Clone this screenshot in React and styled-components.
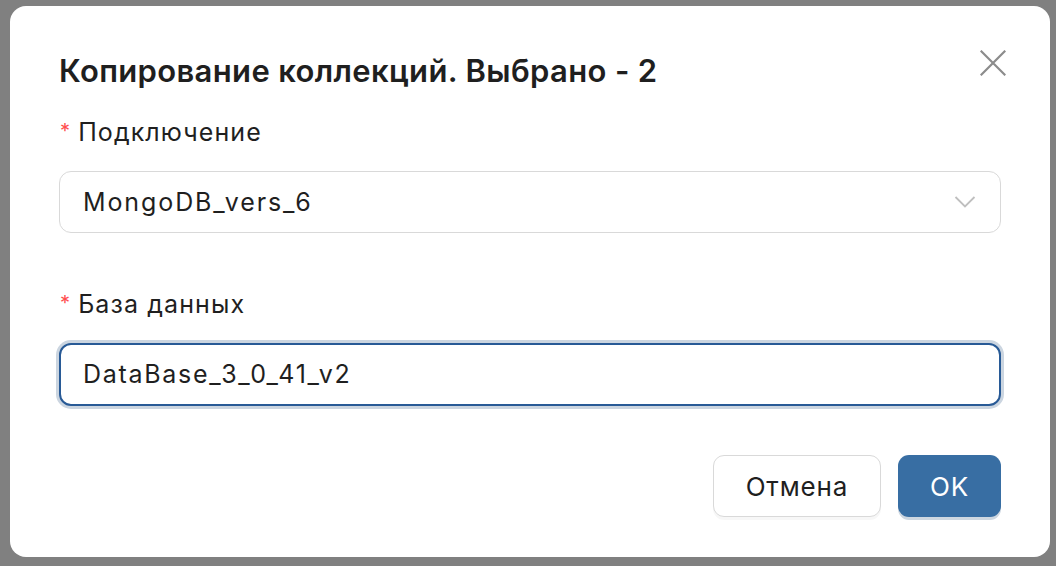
import styled, { createGlobalStyle } from 'styled-components';

const GlobalStyle = createGlobalStyle`
  html, body {
    margin: 0;
    padding: 0;
    background: #808080;
    font-family: Inter, 'Noto Sans', 'Liberation Sans', sans-serif;
  }
`;

const Page = styled.div`
  width: 1056px;
  height: 566px;
  box-sizing: border-box;
  padding: 6px 6px 9px 10px;
  background: #808080;
  overflow: hidden;
`;

const Modal = styled.div`
  position: relative;
  width: 1040px;
  height: 551px;
  box-sizing: border-box;
  background: #fff;
  border-radius: 16px;
  padding: 47px 49px 40px;
  display: flex;
  flex-direction: column;
`;

const Title = styled.h1`
  margin: 0;
  font-size: 31px;
  letter-spacing: 0.35px;
  line-height: 36px;
  font-weight: 600;
  color: #1f1f1f;
`;

const CloseButton = styled.button`
  position: absolute;
  top: 38px;
  right: 38px;
  width: 38px;
  height: 38px;
  padding: 0;
  border: none;
  background: none;
  display: flex;
  align-items: center;
  justify-content: center;
  cursor: pointer;
`;

const Field = styled.div`
  display: flex;
  flex-direction: column;
  margin-top: ${(p) => p.$top}px;
`;

const Label = styled.label`
  font-size: 25px;
  letter-spacing: 1.1px;
  line-height: 32px;
  color: #1f1f1f;
  margin-bottom: 21px;
  display: flex;
  align-items: baseline;
  padding-left: 1px;

  &::before {
    content: '*';
    color: #ff4d4f;
    font-size: 20px;
    margin-right: 7px;
    position: relative;
    top: -3px;
  }
`;

const SelectBox = styled.div`
  height: 62px;
  box-sizing: border-box;
  border: 1.5px solid #d9d9d9;
  border-radius: 12px;
  display: flex;
  align-items: center;
  justify-content: space-between;
  padding: 0 24px 0 23px;
  font-size: 25px;
  letter-spacing: 1.9px;
  color: #1f1f1f;
`;

const Input = styled.input`
  height: 63px;
  box-sizing: border-box;
  border: 2px solid #285a96;
  border-radius: 12px;
  box-shadow: 0 0 0 3px #cbd5e0;
  padding: 0 22px 2px;
  font-family: inherit;
  font-size: 25px;
  letter-spacing: 1.7px;
  color: #1f1f1f;
  outline: none;
`;

const Footer = styled.div`
  margin-top: auto;
  display: flex;
  justify-content: flex-end;
  gap: 17px;
`;

const Button = styled.button`
  height: 62px;
  box-sizing: border-box;
  border-radius: 11px;
  font-family: inherit;
  font-size: 26px;
  letter-spacing: 0.8px;
  padding: 0 32px;
  cursor: pointer;
  border: ${(p) => (p.$primary ? 'none' : '1.5px solid #d9d9d9')};
  background: ${(p) => (p.$primary ? '#386ea3' : '#fff')};
  color: ${(p) => (p.$primary ? '#fff' : '#1f1f1f')};
  box-shadow: ${(p) =>
    p.$primary ? '0 3px 0 #cdd7e1' : '0 3px 0 rgba(0, 0, 0, 0.03)'};
`;

export default function App() {
  return (
    <>
      <GlobalStyle />
      <Page>
        <Modal>
          <CloseButton aria-label="Close">
            <svg width="26" height="26" viewBox="0 0 26 26">
              <path
                d="M1.5 1.5 L24.5 24.5 M24.5 1.5 L1.5 24.5"
                stroke="#8c8c8c"
                strokeWidth="2.2"
                strokeLinecap="square"
              />
            </svg>
          </CloseButton>
          <Title>Копирование коллекций. Выбрано - 2</Title>
          <Field $top={27}>
            <Label>Подключение</Label>
            <SelectBox>
              <span>MongoDB_vers_6</span>
              <svg width="22" height="14" viewBox="0 0 22 14">
                <path
                  d="M1.5 2 L11 11.5 L20.5 2"
                  fill="none"
                  stroke="#bfbfbf"
                  strokeWidth="1.8"
                />
              </svg>
            </SelectBox>
          </Field>
          <Field $top={55}>
            <Label>База данных</Label>
            <Input defaultValue="DataBase_3_0_41_v2" />
          </Field>
          <Footer>
            <Button>Отмена</Button>
            <Button $primary>OK</Button>
          </Footer>
        </Modal>
      </Page>
    </>
  );
}
